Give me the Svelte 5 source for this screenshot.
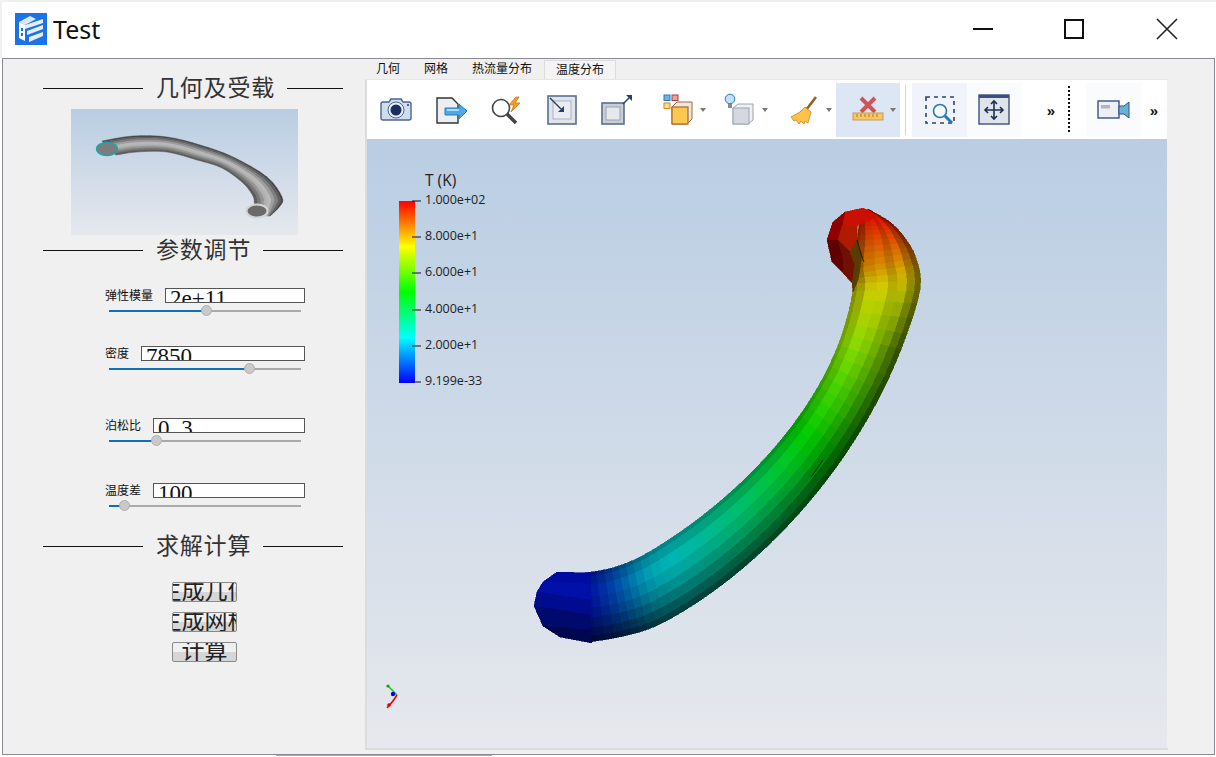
<script>
  const params = [
    { label: "弹性模量", value: "2e+11", pct: 51, top: 23 },
    { label: "密度", value: "7850", pct: 73, top: 27 },
    { label: "泊松比", value: "0.3", pct: 24.5, top: 41, wide: true },
    { label: "温度差", value: "100", pct: 8.3, top: 34 },
  ];
  const tabs = ["几何", "网格", "热流量分布", "温度分布"];
  const actions = ["生成几何", "生成网格", "计算"];

  function bezier(p, t) {
    const m = 1 - t;
    return m * m * m * p[0] + 3 * m * m * t * p[1] + 3 * m * t * t * p[2] + t * t * t * p[3];
  }

  // pipe: stations across the tube, [concave edge, convex edge, temperature]
  function pipeStations() {
    const out = [
      [585, 573, 590, 642, 3],
      [612, 568, 624, 636, 12],
    ];
    for (let i = 0; i <= 8; i++) {
      const t = i / 8;
      out.push([
        bezier([640, 725, 835, 853], t),
        bezier([557, 510, 410, 290], t),
        bezier([656, 755, 880, 920], t),
        bezier([626, 578, 452, 290], t),
        22 + 54 * Math.pow(t, 1.2),
      ]);
    }
    out.push([852, 268, 916, 258, 85], [857, 240, 905, 238, 92], [860, 222, 890, 222, 97], [866, 210, 868, 209, 99]);
    return out;
  }

  const strips = [0, 0.06, 0.18, 0.36, 0.52, 0.66, 0.8, 0.92, 1];
  const shades = [0.75, 0.88, 1, 0.92, 0.8, 0.66, 0.5, 0.36];

  function jet(t) {
    let r = 0, g = 0, b = 0;
    if (t < 25) { g = t / 25; b = 1; }
    else if (t < 50) { g = 1; b = (50 - t) / 25; }
    else if (t < 75) { r = (t - 50) / 25; g = 1; }
    else { r = 1; g = (100 - t) / 25; }
    return [r, g, b];
  }

  function catmull(a, b, c, d, f) {
    return 0.5 * (2 * b + (c - a) * f + (2 * a - 5 * b + 4 * c - d) * f * f + (3 * b - a - 3 * c + d) * f * f * f);
  }

  function subdivide(stations) {
    const out = [];
    const n = stations.length;
    for (let i = 0; i < n - 1; i++) {
      const p0 = stations[Math.max(i - 1, 0)];
      const p1 = stations[i];
      const p2 = stations[i + 1];
      const p3 = stations[Math.min(i + 2, n - 1)];
      for (let k = 0; k < 4; k++) {
        out.push(p1.map((_, j) => catmull(p0[j], p1[j], p2[j], p3[j], k / 4)));
      }
    }
    out.push(stations[n - 1]);
    return out;
  }

  function buildTube(stations, bands, colourOf) {
    const rows = subdivide(stations);
    const polys = [];
    const lerp = (row, u) => `${row[0] + (row[2] - row[0]) * u},${row[1] + (row[3] - row[1]) * u}`;
    for (let i = 0; i < rows.length - 1; i++) {
      const s = rows[i];
      const e = rows[i + 1];
      for (let k = 0; k < bands.length - 1; k++) {
        polys.push({
          points: [lerp(s, bands[k]), lerp(s, bands[k + 1]), lerp(e, bands[k + 1]), lerp(e, bands[k])].join(" "),
          fill: colourOf(s, k),
        });
      }
    }
    return polys;
  }

  const pipe = buildTube(pipeStations(), strips, (s, k) => {
    const c = jet(s[4]);
    const light = 0.62 + s[4] * 0.0035;
    // the inside of the bend near the red end sits in shadow, its outside catches light
    const f = Math.max(0, Math.min(1, (s[4] - 66) / 14));
    const inner = k < 2 ? 1 - 0.28 * f : k === 2 ? 1 - 0.15 * f : k > 4 ? 1 + 0.4 * f : 1;
    const v = shades[k] * light * inner * 255;
    return `rgb(${c[0] * v},${c[1] * v},${c[2] * v})`;
  });

  const thumbGreys = ["#454545", "#5e5e5e", "#7c7c7c", "#9c9c9c", "#b8b8b8", "#b0b0b0", "#949494", "#767676", "#5a5a5a", "#444444"];
  const thumbBands = [0, 0.08, 0.18, 0.3, 0.42, 0.54, 0.66, 0.78, 0.9, 1];
  const thumb = buildTube(
    [
      [102, 141, 116, 155],
      [133, 136, 137, 152],
      [167, 137, 167, 152],
      [200, 145, 197, 160],
      [233, 157, 222, 168],
      [267, 177, 243, 183],
      [282, 197, 253, 196],
      [280, 206, 255, 205],
      [270, 216, 262, 216],
    ],
    thumbBands,
    (s, k) => thumbGreys[k],
  );

  const blueCap = [
    ["590,573 557,572 543,582 590,584", "#000ca0"],
    ["543,582 590,584 590,600 537,592", "#0010a8"],
    ["537,592 590,600 590,615 534,606", "#000c90"],
    ["534,606 590,615 590,630 543,626", "#000a6c"],
    ["543,626 590,630 592,643 560,637", "#000650"],
  ];
  const redCap = [
    ["845,212 863,208 878,216 857,226 842,226", "#cc1000"],
    ["833,222 845,212 842,226 838,240 827,240", "#900000"],
    ["827,240 838,240 843,258 843,273 832,262", "#600000"],
    ["842,226 857,226 857,240 850,252 838,240", "#b01a00"],
    ["838,240 850,252 855,265 852,283 843,273 843,258", "#701000"],
    ["850,252 857,240 862,255 858,280 853,292 852,283 855,265", "#5a3c00"],
  ];
  const ticks = [
    { y: 201, text: "1.000e+02" },
    { y: 237, text: "8.000e+1" },
    { y: 273, text: "6.000e+1" },
    { y: 310, text: "4.000e+1" },
    { y: 346, text: "2.000e+1" },
    { y: 382, text: "9.199e-33" },
  ];
</script>

<div class="window">
  <header class="titlebar">
    <svg class="logo" width="32" height="32" viewBox="0 0 32 32">
      <rect width="32" height="32" fill="#1a73e8" />
      <path d="M4 9 15 3l6 3-11 6z" fill="#dfe6f0" />
      <path d="M4 9l6 3v16l-6-3z" fill="#fff" />
      <path d="M10 12l18-6v4L10 16zM12 18l16-6v4l-16 6zM14 24l14-5v4l-14 6z" fill="#e8edf5" />
      <path d="M6 15h2v3H6zM6 20h2v3H6z" fill="#1a73e8" />
    </svg>
    <span class="title">Test</span>
    <svg class="controls" width="216" height="24" viewBox="0 0 216 24">
      <path d="M12 12h20" stroke="#111" stroke-width="2" />
      <rect x="104" y="3" width="18" height="18" fill="none" stroke="#111" stroke-width="2" />
      <path d="M196 2l20 20M216 2l-20 20" stroke="#222" stroke-width="1.6" />
    </svg>
  </header>

  <main class="main">
    <aside class="panel">
      <div class="heading first"><i></i><span>几何及受载</span><i></i></div>
      <svg class="preview" width="227" height="126" viewBox="71 109 227 126">
        <defs>
          <linearGradient id="sky" x1="0" y1="0" x2="0" y2="1">
            <stop offset="0" stop-color="#b9cde3" />
            <stop offset="1" stop-color="#e6e8ed" />
          </linearGradient>
          <filter id="soft" x="-5%" y="-5%" width="110%" height="110%">
            <feGaussianBlur stdDeviation="0.6" />
          </filter>
        </defs>
        <rect x="71" y="109" width="227" height="126" fill="url(#sky)" />
        <g filter="url(#soft)">
          {#each thumb as p}
            <polygon points={p.points} fill={p.fill} stroke={p.fill} stroke-width="0.5" />
          {/each}
        </g>
        <ellipse cx="107" cy="149" rx="10.5" ry="6.5" fill="#7c7c7c" stroke="#1aa5ad" stroke-width="1.3" />
        <ellipse cx="257" cy="211" rx="10.5" ry="6.5" fill="#6a6a6a" stroke="#d4d4d4" stroke-width="2" />
      </svg>

      <div class="heading"><i></i><span>参数调节</span><i></i></div>

      {#each params as p}
        <div class="param" style="margin-top: {p.top}px">
          <div class="field">
            <label>{p.label}</label>
            <div class="value" class:wide={p.wide}>{p.value}</div>
          </div>
          <div class="slider">
            <div class="fill" style="width: {p.pct}%"></div>
            <div class="thumb" style="left: {p.pct}%"></div>
          </div>
        </div>
      {/each}

      <div class="heading solve"><i></i><span>求解计算</span><i></i></div>

      <div class="actions">
        {#each actions as a}
          <button>{a}</button>
        {/each}
      </div>
    </aside>

    <section class="work">
      <nav class="tabs">
        {#each tabs as t, i}
          <div class="tab" class:active={i === 3}>{t}</div>
        {/each}
      </nav>
      <div class="frame">
        <div class="toolbar">
          <div class="tool w56">
            <svg width="36" height="36" viewBox="0 0 36 36">
              <path d="M4 10h7l2-3h10l2 3h6q2 0 2 2v14q0 2-2 2H5q-2 0-2-2V12q0-2 2-2z" fill="#cfdcf0" stroke="#4c6690" stroke-width="1.4" />
              <circle cx="18" cy="18" r="8" fill="#e8eef8" stroke="#4c6690" />
              <circle cx="18" cy="18" r="5.5" fill="#1c2f5e" />
              <rect x="29" y="12" width="2" height="2" fill="#4c6690" />
            </svg>
          </div>
          <div class="tool w56">
            <svg width="36" height="36" viewBox="0 0 36 36">
              <path d="M3 6h15l6 6v19H3z" fill="#eceef2" stroke="#333" stroke-width="1.4" />
              <path d="M11 16h14v-4l8 7-8 8v-4H11z" fill="#4fa8e6" stroke="#2a7cc0" />
              <path d="M13 18h12" stroke="#a9dcff" stroke-width="2" />
            </svg>
          </div>
          <div class="tool w54">
            <svg width="36" height="36" viewBox="0 0 36 36">
              <circle cx="12" cy="16" r="8.5" fill="#fff" stroke="#444" stroke-width="1.6" />
              <path d="M18 22l9 9" stroke="#444" stroke-width="3.5" />
              <path d="M27 5l-7 8h5l-3 7 9-9h-5l4-6z" fill="#f0a020" stroke="#c8731a" stroke-width="0.8" />
            </svg>
          </div>
          <div class="tool w55">
            <svg width="36" height="36" viewBox="0 0 36 36">
              <rect x="4" y="4" width="28" height="28" fill="#dfe3ea" stroke="#5a6d90" stroke-width="1.6" />
              <rect x="9" y="9" width="18" height="18" fill="#eaecf0" stroke="#aab3c2" />
              <path d="M6 6l11 11" stroke="#26406e" stroke-width="1.4" />
              <path d="M20 20v-6l-6 6z" fill="#26406e" />
            </svg>
          </div>
          <div class="tool w56">
            <svg width="36" height="36" viewBox="0 0 36 36">
              <rect x="3" y="11" width="22" height="21" fill="#c8cdd6" stroke="#5a6d90" stroke-width="1.6" />
              <rect x="7" y="15" width="14" height="13" fill="#e6e8ec" stroke="#9aa4b4" />
              <path d="M24 12l7-7" stroke="#26406e" stroke-width="1.4" />
              <path d="M33 3v6l-6-6z" fill="#26406e" />
            </svg>
          </div>
          <div class="tool w65">
            <svg width="36" height="36" viewBox="-2 0 36 36">
              <rect x="2" y="3" width="6" height="5.5" fill="#6ab4e8" stroke="#2a78b4" />
              <rect x="10" y="3" width="6" height="5.5" fill="#e8a0a0" stroke="#a84040" />
              <rect x="2" y="11" width="6" height="5.5" fill="#fcd890" stroke="#d88820" />
              <path d="M10 15l5-5h15v17l-5 5H10z" fill="#e6e8ec" stroke="#a8682a" />
              <rect x="10" y="15" width="16" height="17" fill="#fcc850" stroke="#a8682a" stroke-width="1.2" />
            </svg>
            <span class="arrow"></span>
          </div>
          <div class="tool w62">
            <svg width="36" height="36" viewBox="0 0 36 36">
              <circle cx="7" cy="7" r="4.8" fill="#bfe2f8" stroke="#2a78b4" />
              <rect x="5" y="12" width="4" height="4" fill="#889" />
              <path d="M10 16l5-4h15v16l-5 4H10z" fill="#eef0f3" stroke="#9aa4b4" />
              <rect x="10" y="16" width="16" height="16" fill="#d5d9df" stroke="#9aa4b4" />
            </svg>
            <span class="arrow"></span>
          </div>
          <div class="tool w64">
            <svg width="36" height="36" viewBox="0 0 36 36">
              <path d="M30 5L20 18" stroke="#9a5a20" stroke-width="2.6" />
              <path d="M19 15l6 5-3 11-3-2-1 3-3-3-2 3-3-4-2 1-3-4 9-5z" fill="#fcc24a" stroke="#d88a20" stroke-width="0.9" />
            </svg>
            <span class="arrow"></span>
          </div>
          <div class="tool w64 on">
            <svg width="36" height="36" viewBox="0 0 36 36">
              <path d="M11 6l14 14M25 6L11 20" stroke="#cf5555" stroke-width="4" />
              <rect x="3" y="21" width="30" height="7" fill="#f4c868" stroke="#d09a50" />
              <path d="M7 22v3M11 22v3M15 22v3M19 22v3M23 22v3M27 22v3" stroke="#a87830" />
            </svg>
            <span class="arrow"></span>
          </div>
          <div class="sep"></div>
          <div class="tool w55 soft">
            <svg width="36" height="36" viewBox="0 0 36 36">
              <rect x="4" y="5" width="28" height="26" fill="none" stroke="#2c4270" stroke-width="1.6" stroke-dasharray="4 4" />
              <circle cx="18" cy="19" r="6.5" fill="#f4f8fc" stroke="#2a78b4" stroke-width="1.6" />
              <path d="M23 24l7 7" stroke="#2a78b4" stroke-width="3" />
            </svg>
          </div>
          <div class="tool w54 softer">
            <svg width="36" height="36" viewBox="0 0 36 36">
              <rect x="3" y="3" width="30" height="29" fill="#dfe3ea" stroke="#3c5080" stroke-width="1.4" />
              <rect x="3" y="3" width="30" height="3" fill="#3c5080" />
              <path d="M18 9v17M10 18h16M15 12l3-3 3 3M15 24l3 3 3-3M12 15l-3 3 3 3M24 15l3 3-3 3" fill="none" stroke="#1f2f52" stroke-width="1.6" />
            </svg>
          </div>
          <div class="more w44">»</div>
          <div class="dots"></div>
          <div class="tool w55 softer">
            <svg width="36" height="36" viewBox="0 0 36 36">
              <rect x="2" y="9" width="21" height="17" fill="#eceff4" stroke="#3c5080" stroke-width="1.4" />
              <rect x="5" y="13" width="9" height="3.5" fill="#b0b6c0" />
              <path d="M23 14h5l5-4v16l-5-4h-5z" fill="#6ab0d8" stroke="#3c5080" />
            </svg>
          </div>
          <div class="more w26">»</div>
        </div>

        <svg class="canvas" width="800" height="609" viewBox="367 139 800 609">
          <defs>
            <linearGradient id="bg" x1="0" y1="0" x2="0" y2="1">
              <stop offset="0" stop-color="#b9cde3" />
              <stop offset="1" stop-color="#e6e8ed" />
            </linearGradient>
            <linearGradient id="scale" x1="0" y1="1" x2="0" y2="0">
              <stop offset="0" stop-color="#0000ff" />
              <stop offset="0.25" stop-color="#00ffff" />
              <stop offset="0.5" stop-color="#00ff00" />
              <stop offset="0.75" stop-color="#ffff00" />
              <stop offset="1" stop-color="#ff0000" />
            </linearGradient>
          </defs>
          <rect x="367" y="139" width="800" height="609" fill="url(#bg)" />

          <g shape-rendering="crispEdges">
            {#each pipe as p}
              <polygon points={p.points} fill={p.fill} stroke={p.fill} stroke-width="0.6" />
            {/each}
            {#each blueCap as [points, fill]}
              <polygon {points} {fill} stroke={fill} stroke-width="0.6" />
            {/each}
            {#each redCap as [points, fill]}
              <polygon {points} {fill} stroke={fill} stroke-width="0.6" />
            {/each}
          </g>
          <path d="M857 240l4 14 3 8M823 460l-12 17" fill="none" stroke="#111" stroke-width="0.8" />

          <rect x="399" y="201" width="16" height="182" fill="url(#scale)" />
          <text class="legend title-k" x="425" y="186">T (K)</text>
          {#each ticks as t}
            <path d="M412 {t.y}h9" stroke="#111" stroke-width="1" />
            <text class="legend" x="425" y={t.y + 3}>{t.text}</text>
          {/each}

          <path d="M388 686l9 9" stroke="#00e000" stroke-width="1.6" />
          <path d="M397 695l-4 6-6 7" stroke="#f00000" stroke-width="1.6" />
          <circle cx="393" cy="694" r="2.2" fill="#0000e0" />
          <circle cx="388" cy="686" r="1.6" fill="#00b000" />
          <circle cx="389" cy="705" r="1.8" fill="#e00000" />
        </svg>
      </div>
    </section>
  </main>
  <div class="foot"></div>
</div>

<style>
  :global(body) {
    margin: 0;
    background: #fff;
  }

  .window {
    width: 1216px;
    height: 757px;
    overflow: hidden;
    background: #fff;
    display: flex;
    flex-direction: column;
    font-family: "Noto Sans", "Noto Sans CJK SC", sans-serif;
    color: #111;
  }

  .titlebar {
    height: 58px;
    flex: none;
    box-sizing: border-box;
    display: flex;
    align-items: center;
    border-top: 2px solid #f0f0f0;
    border-left: 2px solid #f0f0f0;
    padding: 0 39px 0 13px;
  }

  .logo {
    flex: none;
    margin-top: -2px;
  }

  .title {
    margin-left: 6px;
    margin-top: -2px;
    font-size: 25px;
  }

  .controls {
    margin-left: auto;
    margin-top: -2px;
    overflow: visible;
  }

  .main {
    height: 697px;
    flex: none;
    box-sizing: border-box;
    margin: 0 1px 0 2px;
    border: 1px solid #8a8b92;
    background: #f0f0f0;
    display: flex;
  }

  .panel {
    width: 362px;
    flex: none;
    display: flex;
    flex-direction: column;
  }

  .heading {
    width: 300px;
    height: 30px;
    flex: none;
    margin-left: 40px;
    display: flex;
    align-items: center;
    font-family: "Liberation Serif", "Noto Sans CJK SC", serif;
    font-size: 23px;
    color: #333;
  }

  .heading span {
    margin: 0 12px 4px 13px;
    white-space: nowrap;
    letter-spacing: 0.8px;
  }

  .heading i {
    height: 1px;
    flex: 1;
    background: #111;
  }

  .heading i:first-child {
    flex: none;
    width: 100px;
  }

  .first {
    margin-top: 14px;
  }

  .solve {
    margin-top: 17px;
  }

  .preview {
    display: block;
    margin: 6px 0 0 68px;
    flex: none;
  }

  .param {
    width: 200px;
    margin-left: 102px;
    flex: none;
  }

  .field {
    height: 15px;
    display: flex;
    align-items: center;
    gap: 12px;
  }

  .field label {
    font-size: 12px;
    white-space: nowrap;
    margin-bottom: 2px;
  }

  .value {
    flex: 1;
    height: 15px;
    box-sizing: border-box;
    border: 1px solid #555;
    background: #fff;
    overflow: hidden;
    padding-left: 4px;
    font-family: "Liberation Serif", serif;
    font-size: 23px;
    line-height: 19px;
    color: #111;
  }

  .wide {
    letter-spacing: 3px;
  }

  .slider {
    position: relative;
    width: 192px;
    height: 2px;
    margin: 7px 0 7px 4px;
    background: #aaa;
  }

  .fill {
    height: 2px;
    background: #106ebe;
  }

  .thumb {
    position: absolute;
    top: -5px;
    width: 11px;
    height: 11px;
    margin-left: -5.5px;
    box-sizing: border-box;
    border: 1px solid #b0b0b0;
    border-radius: 50%;
    background: #c9c9c9;
  }

  .actions {
    margin: 21px 0 0 169px;
    display: flex;
    flex-direction: column;
    gap: 10px;
  }

  .actions button {
    width: 65px;
    height: 20px;
    padding: 0;
    box-sizing: border-box;
    border: 1px solid #8a8a8a;
    border-radius: 2px;
    background: linear-gradient(#f0f0f0 50%, #d6d6d6 50%);
    display: flex;
    justify-content: center;
    align-items: center;
    overflow: hidden;
    white-space: nowrap;
    font-family: "Liberation Serif", "Noto Sans CJK SC", serif;
    font-size: 23px;
    line-height: 20px;
    color: #222;
  }

  .work {
    width: 805px;
    flex: none;
    display: flex;
    flex-direction: column;
  }

  .tabs {
    height: 20px;
    flex: none;
    box-sizing: border-box;
    padding-top: 1px;
    margin-left: -1px;
    display: flex;
    font-size: 12px;
  }

  .tab {
    padding: 0 12px;
    line-height: 18px;
    white-space: nowrap;
  }

  .active {
    padding: 0 11px;
    background: #f4f4f4;
    border: 1px solid #dcdcdc;
    border-bottom: 0;
  }

  .frame {
    height: 671px;
    width: 803px;
    box-sizing: border-box;
    border-left: 2px solid #dcdcdc;
    border-top: 1px solid #e6e6e6;
    border-bottom: 2px solid #dcdcdc;
    display: flex;
    flex-direction: column;
  }

  .toolbar {
    height: 59px;
    width: 800px;
    flex: none;
    box-sizing: border-box;
    padding: 3px 0 2px 1px;
    background: #fff;
    display: flex;
  }

  .tool {
    position: relative;
    height: 54px;
    flex: none;
    display: flex;
    align-items: center;
    justify-content: center;
  }

  .w26 { width: 26px; }
  .w44 { width: 44px; padding-left: 16px; box-sizing: border-box; }
  .w54 { width: 54px; }
  .w55 { width: 55px; }
  .w56 { width: 56px; }
  .w62 { width: 62px; }
  .w64 { width: 64px; }
  .w65 { width: 65px; }

  .arrow {
    position: absolute;
    right: 4px;
    top: 25px;
    border: 3px solid transparent;
    border-top: 4px solid #777;
  }

  .on {
    background: #dde6f5;
  }

  .soft {
    background: #f0f4fa;
  }

  .softer {
    background: #f9fbfd;
  }

  .sep {
    width: 1px;
    height: 50px;
    margin: 2px 6px 0 5px;
    flex: none;
    background: #d4d4d4;
  }

  .more {
    height: 54px;
    flex: none;
    display: flex;
    align-items: center;
    justify-content: center;
    font-family: "Liberation Sans", sans-serif;
    font-size: 15px;
    font-weight: 700;
    color: #111;
  }

  .dots {
    width: 2px;
    height: 48px;
    margin: 3px 16px 0 3px;
    flex: none;
    background: repeating-linear-gradient(#111 0 2px, transparent 2px 4px);
  }

  .canvas {
    display: block;
    flex: none;
  }

  .legend {
    font-family: "Open Sans", sans-serif;
    font-size: 12.5px;
    fill: #222;
  }

  .title-k {
    font-size: 15.5px;
  }

  .foot {
    height: 1px;
    width: 216px;
    margin-left: 276px;
    background: #a8a8a8;
  }
</style>
